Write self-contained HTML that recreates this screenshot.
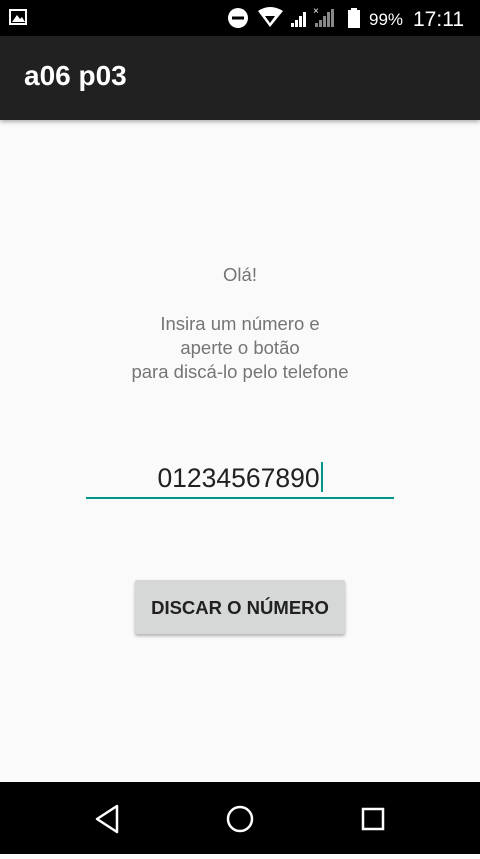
<!DOCTYPE html>
<html><head><meta charset="utf-8"><style>
body{margin:0;width:480px;height:854px;background:#fafafa;font-family:"Liberation Sans","DejaVu Sans",sans-serif;position:relative;overflow:hidden}
.sb{position:absolute;top:0;left:0;width:480px;height:36px;background:#000;color:#fff}
.ab{position:absolute;top:36px;left:0;width:480px;height:84px;background:#212121;box-shadow:0 2px 4px rgba(0,0,0,.3)}
.ab span{position:absolute;left:24px;top:24px;font-size:28px;color:#fff;font-weight:bold}
.txt{position:absolute;left:0;width:480px;text-align:center;color:#757575;font-size:18.5px;line-height:24px}
.nav{position:absolute;bottom:0;left:0;width:480px;height:72px;background:#000}
</style></head><body>
<div class="sb">
<svg width="480" height="36" style="position:absolute;left:0;top:0">
<rect x="10" y="10" width="16" height="14" fill="none" stroke="#fff" stroke-width="2"/>
<path d="M12 22 L17 15 L20 19 L22 17 L25 22Z" fill="#fff"/>
<circle cx="238" cy="18" r="10" fill="#fff"/><rect x="232" y="16.5" width="12" height="3" fill="#000"/>
<path d="M258 11 Q270 3 283 11 L270 27Z" fill="#fff"/><path d="M265 16 L275 16 L270 23Z" fill="#000"/>
<path d="M291 27h3v-4h-3zM295 27h3v-7h-3zM299 27h3v-11h-3zM303 27h3v-15h-3z" fill="#fff"/>
<path d="M315 27h3v-4h-3zM319 27h3v-7h-3zM323 27h3v-11h-3zM327 27h3v-15h-3zM331 27h3v-18h-3z" fill="#888"/>
<text x="313" y="14" fill="#fff" font-size="10" font-family="Liberation Sans">×</text>
<rect x="348" y="10" width="12" height="18" fill="#fff"/><rect x="351" y="8" width="6" height="3" fill="#fff"/>
<text x="369" y="25" fill="#fff" font-size="17" font-family="Liberation Sans">99%</text>
<text x="413" y="26" fill="#fff" font-size="21" font-family="Liberation Sans">17:11</text>
</svg></div>
<div class="ab"><span>a06 p03</span></div>
<div class="txt" style="top:263px">Olá!</div>
<div class="txt" style="top:312px">Insira um número e<br>aperte o botão<br>para discá-lo pelo telefone</div>
<div style="position:absolute;left:0;width:480px;top:462px;text-align:center;font-size:26.5px;color:#212121">01234567890<span style="display:inline-block;width:2px;height:30px;background:#009688;vertical-align:-5px;margin-left:1px"></span></div>
<div style="position:absolute;left:86px;top:497px;width:308px;height:2px;background:#009688"></div>
<div style="position:absolute;left:135px;top:580px;width:210px;height:54px;background:#d6d7d7;border-radius:2px;box-shadow:0 2px 3px rgba(0,0,0,.3);text-align:center;line-height:56px;font-size:18.5px;font-weight:bold;color:#212121">DISCAR O NÚMERO</div>
<div class="nav"><svg width="480" height="72">
<path d="M117 24 L97 37 L117 50Z" fill="none" stroke="#fff" stroke-width="2.5" stroke-linejoin="round"/>
<circle cx="240" cy="37" r="12" fill="none" stroke="#fff" stroke-width="2.5"/>
<rect x="363" y="27" width="20" height="20" fill="none" stroke="#fff" stroke-width="2.5"/>
</svg></div>
</body></html>
